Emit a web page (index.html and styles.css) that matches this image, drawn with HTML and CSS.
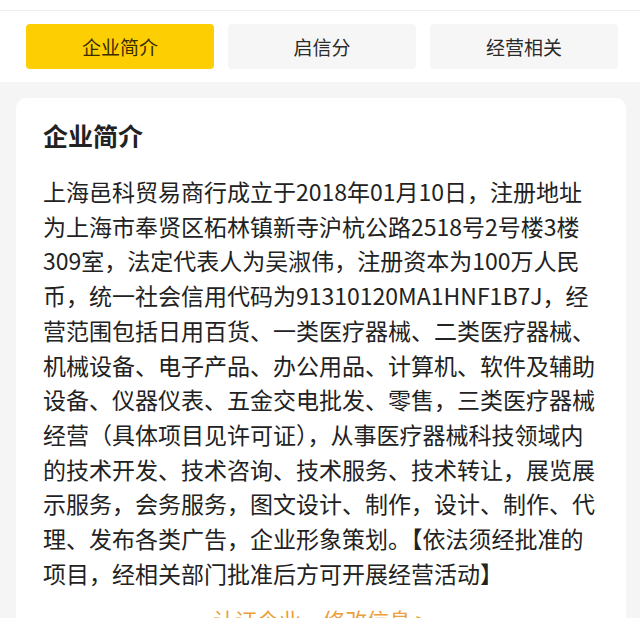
FILE: index.html
```html
<!DOCTYPE html>
<html lang="zh-CN">
<head>
    <meta charset="UTF-8">
    <meta name="viewport" content="width=device-width, initial-scale=1.0">
    <title>企业简介</title>
    <link rel="stylesheet" href="styles.css">
</head>
<body>
    <div class="topbar"></div>
    <div class="tabs">
        <div class="tab active">企业简介</div>
        <div class="tab">启信分</div>
        <div class="tab">经营相关</div>
    </div>
    <div class="main">
        <div class="card">
            <h2>企业简介</h2>
            <p class="intro">上海邑科贸易商行成立于2018年01月10日，注册地址为上海市奉贤区柘林镇新寺沪杭公路2518号2号楼3楼309室，法定代表人为吴淑伟，注册资本为100万人民币，统一社会信用代码为91310120MA1HNF1B7J，经营范围包括日用百货、一类医疗器械、二类医疗器械、机械设备、电子产品、办公用品、计算机、软件及辅助设备、仪器仪表、五金交电批发、零售，三类医疗器械经营（具体项目见许可证），从事医疗器械科技领域内的技术开发、技术咨询、技术服务、技术转让，展览展示服务，会务服务，图文设计、制作，设计、制作、代理、发布各类广告，企业形象策划。【依法须经批准的项目，经相关部门批准后方可开展经营活动】</p>
            <div class="more">认证企业，修改信息 &gt;</div>
        </div>
    </div>
</body>
</html>
```

FILE: styles.css
```css
body {
    margin: 0;
    background: #f5f5f5;
    font-family: "Noto Sans CJK SC", "Noto Sans", sans-serif;
    color: #222;
}
.topbar {
    height: 10px;
    background: #fff;
    border-bottom: 1px solid #ececec;
}
.tabs {
    display: flex;
    gap: 14px;
    padding: 13px 22px 13px 26px;
    background: #fff;
}
.tab {
    flex: 1;
    height: 45px;
    line-height: 45px;
    text-align: center;
    font-size: 19px;
    color: #2a2a2a;
    background: #f6f6f6;
    border-radius: 4px;
}
.tab.active {
    background: #fdcf02;
    color: #3a2c00;
}
.main {
    padding: 16px 14px 0 16px;
}
.card {
    background: #fff;
    border-radius: 10px;
    padding: 20px 28px 30px 27px;
}
h2 {
    margin: 0;
    font-size: 25px;
    line-height: 34px;
    font-weight: bold;
    color: #222;
}
.intro {
    margin: 22px 0 0;
    font-size: 23px;
    line-height: 34.7px;
    color: #222;
}
.more {
    margin-top: 12px;
    text-align: center;
    font-size: 22px;
    line-height: 34px;
    color: #eaa03a;
}
```
